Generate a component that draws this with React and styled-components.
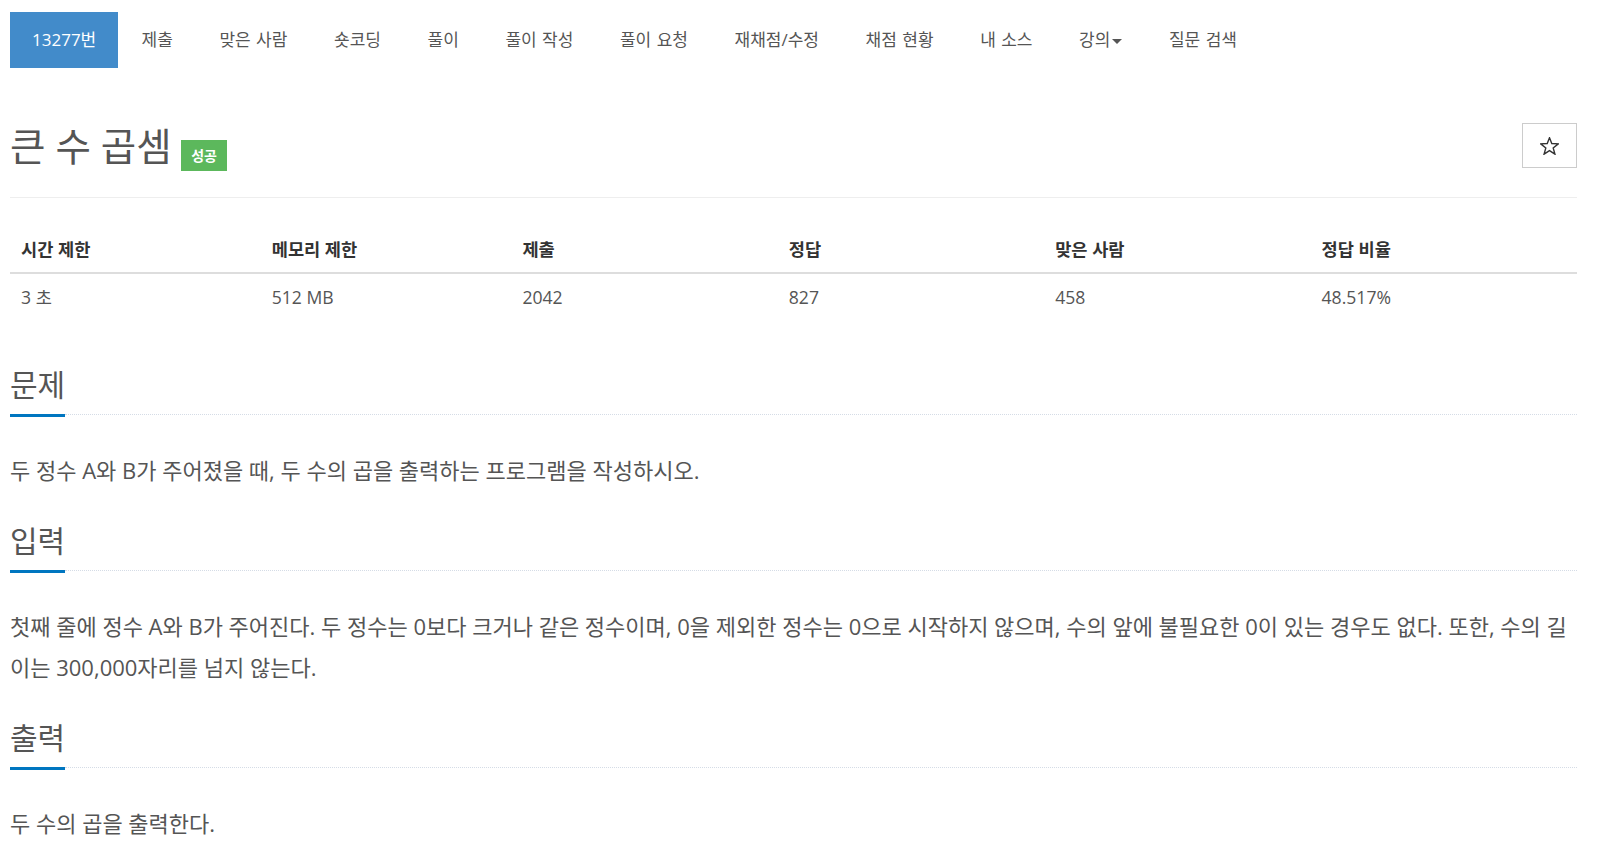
import React from "react";
import styled, { createGlobalStyle } from "styled-components";

const Global = createGlobalStyle`
  html, body { margin: 0; padding: 0; background: #fff; }
  body {
    font-family: "Open Sans", "Noto Sans CJK KR", "Noto Sans", sans-serif;
    color: #555;
  }
  * { box-sizing: border-box; }
`;

const Page = styled.div`
  width: 1600px;
  padding: 12px 23px 0 10px;
`;

const Nav = styled.ul`
  display: flex;
  list-style: none;
  margin: 0;
  padding: 0;
  height: 56px;
`;

const NavItem = styled.li`
  padding: 0 ${(p) => (p.$active ? "22px" : "23.3px")};
  line-height: 56px;
  font-size: 17px;
  word-spacing: 1px;
  white-space: nowrap;
  color: ${(p) => (p.$active ? "#fff" : "#555")};
  background: ${(p) => (p.$active ? "#428bca" : "transparent")};
  display: flex;
  align-items: center;
`;

const Caret = styled.span`
  display: inline-block;
  width: 0;
  height: 0;
  margin-left: 2px;
  margin-top: 2px;
  border-top: 5px solid #555;
  border-left: 5px solid transparent;
  border-right: 5px solid transparent;
`;

const Header = styled.div`
  margin-top: 55px;
  display: flex;
  justify-content: space-between;
  align-items: flex-start;
  padding-bottom: 26px;
  border-bottom: 1px solid #eee;
`;

const Title = styled.h1`
  margin: 0;
  display: flex;
  align-items: flex-start;
  font-size: 38.5px;
  line-height: 46px;
  font-weight: 400;
  color: #555;
`;

const Badge = styled.span`
  margin-left: 9px;
  margin-top: 17px;
  height: 31px;
  padding: 0 10.5px;
  background: #5cb85c;
  color: #fff;
  font-size: 14px;
  font-weight: 700;
  line-height: 31px;
`;

const StarButton = styled.button`
  width: 55px;
  height: 45px;
  border: 1px solid #ccc;
  background: #fff;
  display: flex;
  align-items: center;
  justify-content: center;
  padding: 0;
`;

const Table = styled.table`
  width: 100%;
  margin-top: 28px;
  border-collapse: collapse;
  font-size: 17.6px;
  line-height: 24px;
`;

const Th = styled.th`
  text-align: left;
  font-weight: 700;
  color: #333;
  padding: 11px;
  border-bottom: 2px solid #ddd;
  width: ${(p) => p.$w};
`;

const Td = styled.td`
  padding: 11px;
  color: #555;
`;

const Headline = styled.div`
  display: flex;
  align-items: flex-end;
  margin-top: ${(p) => p.$mt}px;
`;

const H2 = styled.h2`
  margin: 0;
  font-size: 30px;
  line-height: 40px;
  font-weight: 400;
  color: #555;
  padding-bottom: 9px;
  border-bottom: 3px solid #0076c0;
  white-space: nowrap;
`;

const Rule = styled.div`
  flex: 1;
  margin-bottom: 2px;
  border-bottom: 1px dotted #d5dce6;
`;

const Para = styled.p`
  margin: 33px 0 0;
  font-size: 22px;
  line-height: 41px;
  color: #555;
  word-break: break-all;
`;

const StarIcon = () => (
  <svg width="19" height="18" viewBox="0 0 20 19.5">
    <polygon
      points="10,0.8 12.47,7.1 19.51,7.41 13.99,11.8 15.88,18.59 10,14.7 4.12,18.59 6.01,11.8 0.49,7.41 7.53,7.1"
      fill="none"
      stroke="#333"
      strokeWidth="1.5"
      strokeLinejoin="miter"
    />
  </svg>
);

const navItems = [
  "제출",
  "맞은 사람",
  "숏코딩",
  "풀이",
  "풀이 작성",
  "풀이 요청",
  "재채점/수정",
  "채점 현황",
  "내 소스",
];

const cols = [
  ["시간 제한", "3 초", "16%"],
  ["메모리 제한", "512 MB", "16%"],
  ["제출", "2042", "17%"],
  ["정답", "827", "17%"],
  ["맞은 사람", "458", "17%"],
  ["정답 비율", "48.517%", "17%"],
];

export default function App() {
  return (
    <Page>
      <Global />
      <Nav>
        <NavItem $active>13277번</NavItem>
        {navItems.map((t) => (
          <NavItem key={t}>{t}</NavItem>
        ))}
        <NavItem>
          강의<Caret />
        </NavItem>
        <NavItem>질문 검색</NavItem>
      </Nav>

      <Header>
        <Title>
          큰 수 곱셈<Badge>성공</Badge>
        </Title>
        <StarButton aria-label="star">
          <StarIcon />
        </StarButton>
      </Header>

      <Table>
        <thead>
          <tr>
            {cols.map(([h, , w]) => (
              <Th key={h} $w={w}>
                {h}
              </Th>
            ))}
          </tr>
        </thead>
        <tbody>
          <tr>
            {cols.map(([h, v]) => (
              <Td key={h}>{v}</Td>
            ))}
          </tr>
        </tbody>
      </Table>

      <Headline $mt={45}>
        <H2>문제</H2>
        <Rule />
      </Headline>
      <Para>
        두 정수 A와 B가 주어졌을 때, 두 수의 곱을 출력하는 프로그램을 작성하시오.
      </Para>

      <Headline $mt={30}>
        <H2>입력</H2>
        <Rule />
      </Headline>
      <Para>
        첫째 줄에 정수 A와 B가 주어진다. 두 정수는 0보다 크거나 같은 정수이며, 0을 제외한 정수는 0으로 시작하지 않으며, 수의 앞에 불필요한 0이 있는 경우도 없다. 또한, 수의 길이는 300,000자리를 넘지 않는다.
      </Para>

      <Headline $mt={30}>
        <H2>출력</H2>
        <Rule />
      </Headline>
      <Para>두 수의 곱을 출력한다.</Para>
    </Page>
  );
}
